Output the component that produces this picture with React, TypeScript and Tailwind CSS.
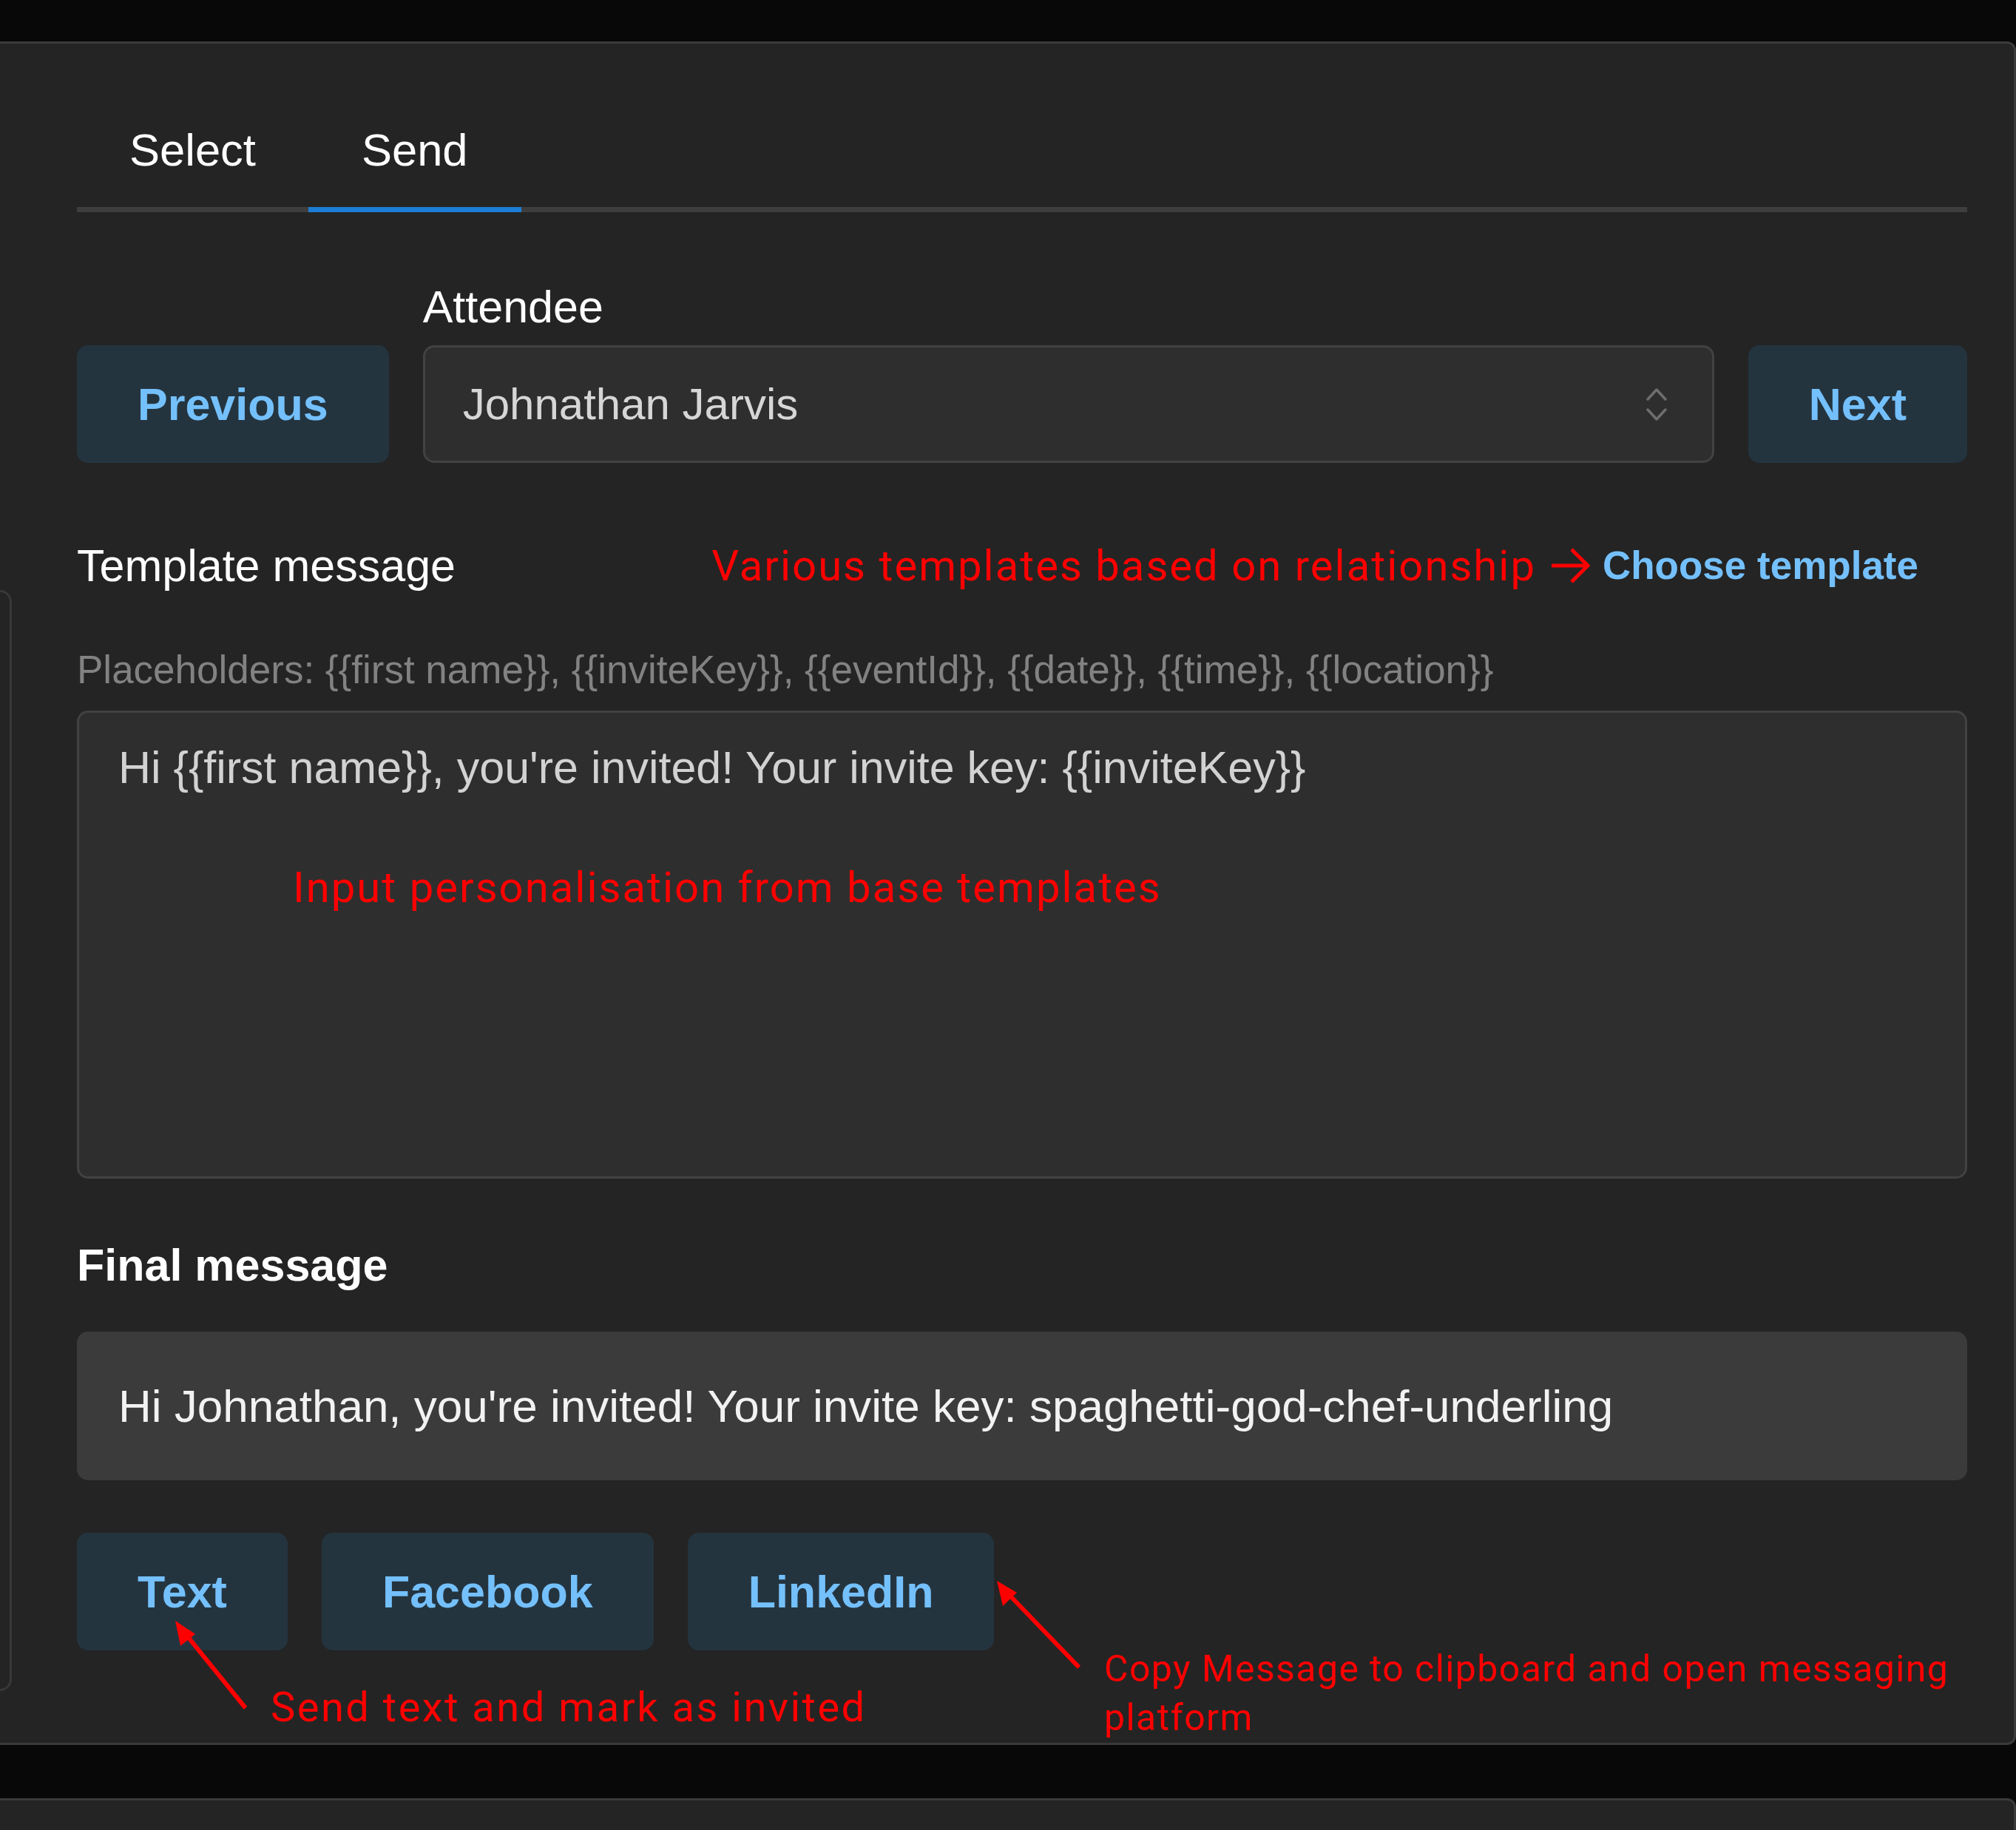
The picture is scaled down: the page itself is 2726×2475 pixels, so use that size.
const blueBtn =
  'h-[159px] shrink-0 px-[82px] rounded-[15px] bg-[#24343f] text-[#74c0fc] font-bold text-[61px] leading-[72px] flex items-center justify-center'

const red = "text-[#ff0000] font-['Roboto',sans-serif]"

function SelectorIcon() {
  return (
    <svg width="30" height="48" viewBox="0 0 30 48" fill="none" stroke="#6e6e6e" strokeWidth="3.5" strokeLinecap="round" strokeLinejoin="round">
      <polyline points="3,17 15,4 27,17" />
      <polyline points="3,31 15,44 27,31" />
    </svg>
  )
}

function Annotations() {
  return (
    <>
      <svg className="absolute top-0 left-0 pointer-events-none" width="2726" height="2475" viewBox="0 0 2726 2475" fill="none">
        <line x1="332" y1="2310" x2="246" y2="2204" stroke="#ff0000" strokeWidth="6" />
        <polygon points="237,2192 264,2210 244,2226" fill="#ff0000" />
        <line x1="1459" y1="2255" x2="1358" y2="2150" stroke="#ff0000" strokeWidth="6" />
        <polygon points="1348,2138 1375,2154 1356,2172" fill="#ff0000" />
      </svg>
      <div className={`absolute left-[366px] top-[2276px] text-[56px] leading-[66px] tracking-[2.5px] ${red}`}>
        Send text and mark as invited
      </div>
      <div className={`absolute left-[1493px] top-[2224px] text-[50px] leading-[66px] tracking-[1.4px] ${red}`}>
        Copy Message to clipboard and open messaging
        <br />
        platform
      </div>
    </>
  )
}

export default function App() {
  return (
    <div className="relative w-[2726px] h-[2475px] overflow-hidden bg-[#080808] flex flex-col font-['Liberation_Sans',Arial,sans-serif] text-white">
      <div className="h-[56px] shrink-0" />

      <div className="h-[2304px] shrink-0 flex bg-[#242424] border-y-[3px] border-r-[3px] border-[#3a3a3a] rounded-r-[12px]">
        {/* edge of the panel behind */}
        <div className="w-[16px] shrink-0 pt-[739px]">
          <div className="h-[1489px] border-y-[3px] border-r-[3px] border-[#383838] rounded-r-[18px]" />
        </div>

        <div className="flex-1 pl-[88px] pr-[63px] pt-[66px] flex flex-col">
          {/* tabs */}
          <div className="flex border-b-[7px] border-[#3e3e3e]">
            <div className="-mb-[7px] border-b-[7px] border-transparent px-[71px] pt-[42px] pb-[41px] text-[61.5px] leading-[72px]">
              Select
            </div>
            <div className="-mb-[7px] border-b-[7px] border-[#1c7ed6] px-[72px] pt-[42px] pb-[41px] text-[61.5px] leading-[72px]">
              Send
            </div>
          </div>

          {/* attendee row */}
          <div className="mt-[92px] flex items-end gap-[46px]">
            <button className={blueBtn}>Previous</button>
            <div className="flex-1 flex flex-col">
              <div className="text-[61px] leading-[72px] mb-[16px]">Attendee</div>
              <div className="h-[159px] border-[3px] border-[#424242] bg-[#2e2e2e] rounded-[15px] flex items-center justify-between pl-[51px] pr-[60px]">
                <span className="text-[60px] text-[#d6d6d6]">Johnathan Jarvis</span>
                <SelectorIcon />
              </div>
            </div>
            <button className={blueBtn}>Next</button>
          </div>

          {/* template header */}
          <div className="mt-[103px] h-[72px] flex items-center justify-between">
            <div className="text-[61px] leading-[72px]">Template message</div>
            <div className="flex items-center pr-[66px]">
              <span className={`text-[58px] leading-[72px] tracking-[2px] ${red}`}>Various templates based on relationship</span>
              <svg className="ml-[21px] mr-[17px]" width="52" height="48" viewBox="0 0 52 48" fill="none" stroke="#ff0000" strokeWidth="5">
                <line x1="0" y1="24" x2="49" y2="24" />
                <polyline points="27,2 49,24 27,46" />
              </svg>
              <span className="text-[53px] font-bold text-[#74c0fc]">Choose template</span>
            </div>
          </div>

          <div className="mt-[76px] text-[53px] leading-[58px] text-[#828282]">
            Placeholders: {'{{first name}}, {{inviteKey}}, {{eventId}}, {{date}}, {{time}}, {{location}}'}
          </div>

          <div className="mt-[26px] h-[633px] shrink-0 border-[3px] border-[#424242] bg-[#2e2e2e] rounded-[15px] px-[53px] pt-[38px]">
            <div className="text-[61px] leading-[72px] text-[#d2d2d2]">
              {"Hi {{first name}}, you're invited! Your invite key: {{inviteKey}}"}
            </div>
            <div className={`mt-[93px] ml-[236px] text-[58px] leading-[66px] tracking-[2px] ${red}`}>
              Input personalisation from base templates
            </div>
          </div>

          <div className="mt-[81px] text-[61px] leading-[72px] font-bold">Final message</div>

          <div className="mt-[54px] h-[201px] shrink-0 bg-[#3b3b3b] rounded-[15px] flex items-center px-[56px]">
            <span className="text-[62px] text-[#f2f2f2]">
              Hi Johnathan, you're invited! Your invite key: spaghetti-god-chef-underling
            </span>
          </div>

          <div className="mt-[71px] flex gap-[46px]">
            <button className={blueBtn}>Text</button>
            <button className={blueBtn}>Facebook</button>
            <button className={blueBtn}>LinkedIn</button>
          </div>
        </div>
      </div>

      <div className="h-[72px] shrink-0" />

      <div className="flex-1 bg-[#242424] border-t-[3px] border-r-[3px] border-[#3a3a3a] rounded-tr-[12px]" />

      <Annotations />
    </div>
  )
}
